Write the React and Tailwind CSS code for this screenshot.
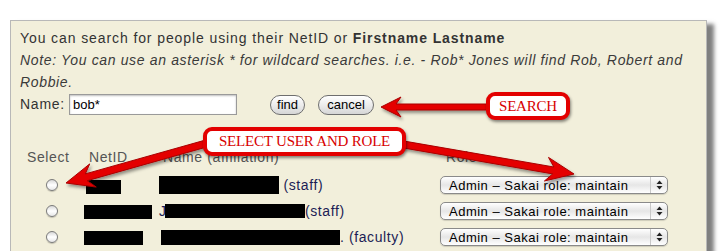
function arrowPoints(tail, tip, headLen, headW, shaftW, notch) {
  const dx = tip[0] - tail[0];
  const dy = tip[1] - tail[1];
  const len = Math.hypot(dx, dy);
  const u = [dx / len, dy / len];
  const p = [-u[1], u[0]];
  const at = (back, side) => [tip[0] - u[0] * back + p[0] * side, tip[1] - u[1] * back + p[1] * side];
  const pts = [
    tip,
    at(headLen, headW),
    at(headLen - notch, shaftW),
    [tail[0] + p[0] * shaftW, tail[1] + p[1] * shaftW],
    [tail[0] - p[0] * shaftW, tail[1] - p[1] * shaftW],
    at(headLen - notch, -shaftW),
    at(headLen, -headW),
  ];
  return pts.map((q) => q[0].toFixed(1) + ',' + q[1].toFixed(1)).join(' ');
}

const ARROWS = [
  { tail: [492, 107], tip: [381, 107], headLen: 20, headW: 10, shaftW: 3, notch: 5 },
  { tail: [215, 141], tip: [66, 183], headLen: 28, headW: 12, shaftW: 3.5, notch: 7 },
  { tail: [395, 143], tip: [574, 174], headLen: 28, headW: 12, shaftW: 3.5, notch: 7 },
];

const ROWS = [
  { netW: 35, netMl: 2, netH: 14, netDy: 2, pre: '', nameMl: 0, nameW: 120, nameH: 18, after: ' (staff)' },
  { netW: 68, netMl: 0, netH: 14, netDy: 1, pre: 'J', nameMl: 0, nameW: 140, nameH: 14, after: '(staff)' },
  { netW: 59, netMl: 0, netH: 14, netDy: 1, pre: '', nameMl: 2, nameW: 179, nameH: 15, after: '. (faculty)' },
];

function RoleSelect() {
  return (
    <div className="flex h-[18px] w-[228px] items-center rounded-[5px] border border-[#8a8a8a] bg-gradient-to-b from-white via-[#e6e6e6] to-white shadow-[0_1px_1px_rgba(0,0,0,0.15)]">
      <span className="flex-1 pl-[8px] text-[13px] leading-none tracking-[0.5px] text-black">
        Admin – Sakai role: maintain
      </span>
      <span className="flex h-full w-[17px] items-center justify-center border-l border-[#c8c8c8]">
        <svg width="7" height="10" viewBox="0 0 7 10">
          <path d="M3.5 0.5 L6.5 4 H0.5 Z" fill="#222" />
          <path d="M3.5 9.5 L6.5 6 H0.5 Z" fill="#222" />
        </svg>
      </span>
    </div>
  );
}

function Radio() {
  return (
    <span className="block h-[12px] w-[12px] rounded-full border border-[#7a7a7a] bg-gradient-to-b from-[#d8d8d8] via-white to-[#e8e8e8] shadow-[0_1px_1px_rgba(0,0,0,0.2)]" />
  );
}

function Callout({ className, children }) {
  return (
    <div
      className={
        'absolute flex items-center justify-center rounded-[9px] border-[4px] border-[#e30000] bg-white shadow-[1px_2px_3px_rgba(0,0,0,0.45)] ' +
        className
      }
    >
      <span className="text-[15px] leading-none tracking-[-0.2px] text-[#d80000]" style={{ fontFamily: '"Liberation Serif", serif' }}>
        {children}
      </span>
    </div>
  );
}

export default function App() {
  return (
    <div className="relative h-[251px] w-[724px] overflow-hidden bg-white" style={{ fontFamily: '"Liberation Sans", Arial, sans-serif' }}>
      <div className="ml-[10px] mt-[20px] h-[260px] w-[697px] border border-[#b8b8b8] bg-[#f2efdb] pl-[9px] pt-[6px] shadow-[7px_4px_4px_rgba(0,0,0,0.5)]">
        <div className="text-[14px] leading-[22px] text-[#333]">
          <p className="tracking-[0.9px]">
            You can search for people using their NetID or <b>Firstname Lastname</b>
          </p>
          <p className="w-[686px] italic tracking-[0.65px] text-[#3a3a3a]">
            Note: You can use an asterisk * for wildcard searches. i.e. - Rob* Jones will find Rob, Robert and Robbie.
          </p>
        </div>

        <div className="mt-[1px] flex h-[21px] items-center">
          <span className="w-[49px] text-[14px] tracking-[0.75px] text-[#333]">Name:</span>
          <div className="flex h-[21px] w-[168px] items-center border border-[#9a9a9a] bg-white pl-[3px] shadow-[inset_0_1px_2px_rgba(0,0,0,0.25)]">
            <span className="text-[13px] text-black">bob*</span>
          </div>
          <button className="ml-[33px] h-[20px] w-[35px] rounded-full border border-[#6e6e6e] bg-gradient-to-b from-white via-[#ececec] to-[#d6d6d6] text-[13px] leading-none text-black">
            find
          </button>
          <button className="ml-[13px] h-[20px] w-[56px] rounded-full border border-[#6e6e6e] bg-gradient-to-b from-white via-[#ececec] to-[#d6d6d6] text-[13px] leading-none text-black">
            cancel
          </button>
        </div>

        <div className="mt-[31px] flex h-[22px] items-center text-[14px] tracking-[0.6px] text-[#555]">
          <span className="w-[64px] pl-[7px]">Select</span>
          <span className="w-[75px] pl-[5px]">NetID</span>
          <span className="w-[281px] pl-[4px]">Name (affiliation)</span>
          <span className="pl-[6px]">Role</span>
        </div>

        <div className="mt-[8px] flex flex-col gap-[8px]">
          {ROWS.map((r, i) => (
            <div key={i} className="flex h-[18px] items-center text-[14px] tracking-[0.6px] text-[#1c1c55]">
              <span className="flex w-[64px] pl-[26px]">
                <Radio />
              </span>
              <span className="flex w-[75px] items-center">
                <span className="block bg-black" style={{ width: r.netW, height: r.netH, marginLeft: r.netMl, marginTop: r.netDy * 2 }} />
              </span>
              <span className="flex w-[281px] items-center whitespace-nowrap">
                {r.pre && <span className="w-[6px]">{r.pre}</span>}
                <span className="block bg-black" style={{ width: r.nameW, height: r.nameH, marginLeft: r.nameMl }} />
                <span className="whitespace-pre">{r.after}</span>
              </span>
              <RoleSelect />
            </div>
          ))}
        </div>
      </div>

      <svg className="pointer-events-none absolute left-0 top-0" width="724" height="251">
        <defs>
          <filter id="sh" x="-20%" y="-50%" width="140%" height="200%">
            <feDropShadow dx="1.5" dy="2.5" stdDeviation="1.5" floodColor="#000" floodOpacity="0.4" />
          </filter>
        </defs>
        {ARROWS.map((a, i) => (
          <polygon
            key={i}
            points={arrowPoints(a.tail, a.tip, a.headLen, a.headW, a.shaftW, a.notch)}
            fill="#e40000"
            stroke="#a80000"
            strokeWidth="1"
            strokeLinejoin="round"
            filter="url(#sh)"
          />
        ))}
      </svg>

      <Callout className="left-[486px] top-[92px] h-[28px] w-[84px]">SEARCH</Callout>
      <Callout className="left-[203px] top-[127px] h-[29px] w-[203px]">SELECT USER AND ROLE</Callout>
    </div>
  );
}
